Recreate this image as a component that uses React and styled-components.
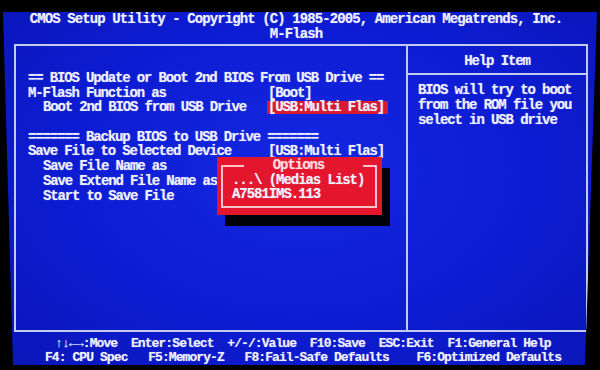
import React from "react";
import styled, { createGlobalStyle } from "styled-components";

const GlobalStyle = createGlobalStyle`
  html, body {
    margin: 0;
    padding: 0;
    background: #000;
  }
  body {
    width: 600px;
    height: 370px;
    overflow: hidden;
  }
`;

const LINE = "#c4c9ee";
const RED = "#e3162e";

const Screen = styled.div`
  margin: 12px 3px 0 3px;
  height: 353px;
  background: radial-gradient(ellipse at 50% 45%, #1428e2 0%, #0d1cd2 55%, #0a16b8 100%);
  clip-path: polygon(0 0, 100% 0, calc(100% - 12px) 100%, 10px 100%);
  color: #eef0ff;
  font-family: "Liberation Mono", "DejaVu Sans Mono", monospace;
  font-weight: bold;
  font-size: 14px;
  text-shadow: 0 0 1px rgba(255, 255, 255, 0.5);
  display: flex;
  flex-direction: column;
`;

const Header = styled.header`
  text-align: center;
  padding-right: 8px;
`;

const TitleLine = styled.div`
  line-height: 14.5px;
  letter-spacing: -0.9px;
  white-space: pre;
`;

const Frame = styled.div`
  margin: 3px 9px 0 11px;
  height: 289px;
  box-sizing: border-box;
  border: 2px solid ${LINE};
  display: grid;
  grid-template-columns: 1fr 180px;
`;

const MainPanel = styled.div`
  position: relative;
  padding: 25px 0 0 12px;
  letter-spacing: -1.15px;
`;

const Row = styled.div`
  display: grid;
  grid-template-columns: 240px auto;
  height: 14.7px;
  line-height: 14.7px;
  white-space: pre;
`;

const Label = styled.span`
  margin-left: ${({ $indent }) => ($indent ? 15 : 0)}px;
`;

const Value = styled.span`
  justify-self: start;
  margin-left: -1px;
  padding: 0 4px 0 1px;
  line-height: 13px;
  align-self: center;
  background: ${({ $active }) => ($active ? "#d81a30" : "transparent")};
`;

const Popup = styled.div`
  position: absolute;
  left: 201px;
  top: 111px;
  width: 165px;
  height: 58px;
  box-sizing: border-box;
  padding: 3px 5px 0 4px;
  background: ${RED};
  box-shadow: 8px 11px 0 #02030a;
  letter-spacing: -1.05px;
`;

const OptionBox = styled.fieldset`
  margin: 0;
  padding: 2px 0 5px 9px;
  border: 2px solid rgba(255, 214, 220, 0.9);
  min-width: 0;
`;

const OptionTitle = styled.legend`
  margin: 0 auto;
  width: 119px;
  box-sizing: border-box;
  padding: 0 10px 0 0;
  text-align: center;
  line-height: 11px;
  background: ${RED};
  color: #ffd9de;
`;

const OptionItem = styled.div`
  line-height: 14px;
  white-space: pre;
`;

const HelpPanel = styled.aside`
  border-left: 2px solid ${LINE};
  display: flex;
  flex-direction: column;
  letter-spacing: -1.1px;
`;

const HelpTitle = styled.div`
  padding: 7.5px 0 5px;
  line-height: 14.7px;
  text-align: center;
  border-bottom: 2px solid ${LINE};
`;

const HelpBody = styled.div`
  padding: 7.5px 0 0 10px;
  line-height: 15px;
  white-space: pre;
`;

const Keys = styled.footer`
  margin-top: 5px;
  text-align: center;
  font-size: 13px;
  letter-spacing: -0.92px;
  padding-left: 6px;
`;

const KeyLine = styled.div`
  line-height: 14px;
  white-space: pre;
`;

const rows = [
  { label: "== BIOS Update or Boot 2nd BIOS From USB Drive ==" },
  { label: "M-Flash Function as", value: "[Boot]" },
  { label: "Boot 2nd BIOS from USB Drive", value: "[USB:Multi Flas]", indent: true, active: true },
  { label: "" },
  { label: "======= Backup BIOS to USB Drive =======" },
  { label: "Save File to Selected Device", value: "[USB:Multi Flas]" },
  { label: "Save File Name as", indent: true },
  { label: "Save Extend File Name as", indent: true },
  { label: "Start to Save File", indent: true },
];

const App = () => (
  <>
    <GlobalStyle />
    <Screen>
      <Header>
        <TitleLine>CMOS Setup Utility - Copyright (C) 1985-2005, American Megatrends, Inc.</TitleLine>
        <TitleLine>M-Flash</TitleLine>
      </Header>
      <Frame>
        <MainPanel>
          {rows.map((r, i) => (
            <Row key={i}>
              <Label $indent={r.indent}>{r.label}</Label>
              {r.value && <Value $active={r.active}>{r.value}</Value>}
            </Row>
          ))}
          <Popup>
            <OptionBox>
              <OptionTitle>Options</OptionTitle>
              <OptionItem>...\ (Medias List)</OptionItem>
              <OptionItem>A7581IMS.113</OptionItem>
            </OptionBox>
          </Popup>
        </MainPanel>
        <HelpPanel>
          <HelpTitle>Help Item</HelpTitle>
          <HelpBody>
            {"BIOS will try to boot\nfrom the ROM file you\nselect in USB drive"}
          </HelpBody>
        </HelpPanel>
      </Frame>
      <Keys>
        <KeyLine>{"↑↓←→:Move  Enter:Select  +/-/:Value  F10:Save  ESC:Exit  F1:General Help"}</KeyLine>
        <KeyLine>{"F4: CPU Spec   F5:Memory-Z   F8:Fail-Safe Defaults    F6:Optimized Defaults"}</KeyLine>
      </Keys>
    </Screen>
  </>
);

export default App;
